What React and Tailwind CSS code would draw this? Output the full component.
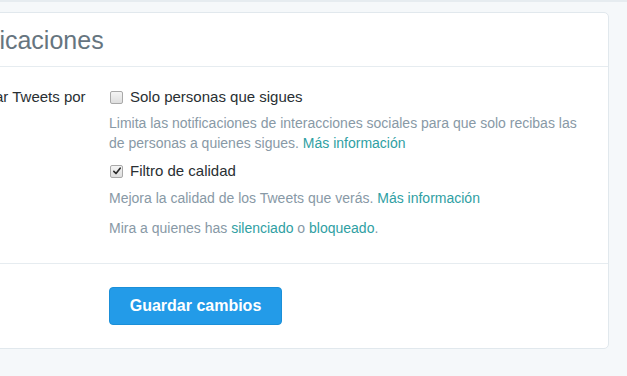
import React from 'react'

const Checkbox = ({ checked }) => (
  <span className="flex h-[13px] w-[13px] shrink-0 items-center justify-center rounded-[2px] border border-[#a9a9a9] bg-gradient-to-b from-[#f4f4f4] to-[#dedede]">
    {checked && (
      <svg viewBox="0 0 12 12" className="h-[10px] w-[10px]">
        <path d="M2.2 6.4 L4.8 9 L9.8 2.6" fill="none" stroke="#2b2b2b" strokeWidth="2" strokeLinecap="round" strokeLinejoin="round" />
      </svg>
    )}
  </span>
)

const Link = ({ children }) => <a className="text-[#2fa0a3] cursor-pointer">{children}</a>

export default function App() {
  return (
    <div className="h-[376px] w-[627px] overflow-hidden border-t-2 border-[#e6ecf0] bg-[#f5f8fa] pt-[10px] font-['Liberation_Sans',Arial,sans-serif]">
      <div className="ml-[-64px] w-[673px] rounded-[5px] border border-[#e1e8ed] bg-white">
        <div className="flex h-[54px] items-center border-b border-[#e6ecf0] pl-[11px]">
          <h1 className="text-[25px] leading-[30px] text-[#66757f]">Notificaciones</h1>
        </div>

        <div className="flex border-b border-[#e6ecf0] pt-[20px] pb-[25px]">
          <div className="w-[172px] shrink-0 pl-[33px] text-[15px] leading-[20px] text-[#292f33]">Filtrar Tweets por</div>
          <div className="w-[482px] text-[14px] leading-[20px] text-[#8899a6]">
            <label className="flex items-center gap-[7px] pl-[1px] text-[15px] text-[#292f33]">
              <Checkbox />
              <span>Solo personas que sigues</span>
            </label>
            <p className="mt-[6px]">
              Limita las notificaciones de interacciones sociales para que solo recibas las de personas a quienes sigues. <Link>Más información</Link>
            </p>
            <label className="mt-[8px] flex items-center gap-[7px] pl-[1px] text-[15px] text-[#292f33]">
              <Checkbox checked />
              <span>Filtro de calidad</span>
            </label>
            <p className="mt-[7px]">
              Mejora la calidad de los Tweets que verás. <Link>Más información</Link>
            </p>
            <p className="mt-[10px]">
              Mira a quienes has <Link>silenciado</Link> o <Link>bloqueado</Link>.
            </p>
          </div>
        </div>

        <div className="flex py-[23px] pl-[172px]">
          <button className="h-[38px] w-[173px] rounded-[4px] border border-[#1b8fd8] bg-[#239be8] text-[16px] font-bold text-white">
            Guardar cambios
          </button>
        </div>
      </div>
    </div>
  )
}
